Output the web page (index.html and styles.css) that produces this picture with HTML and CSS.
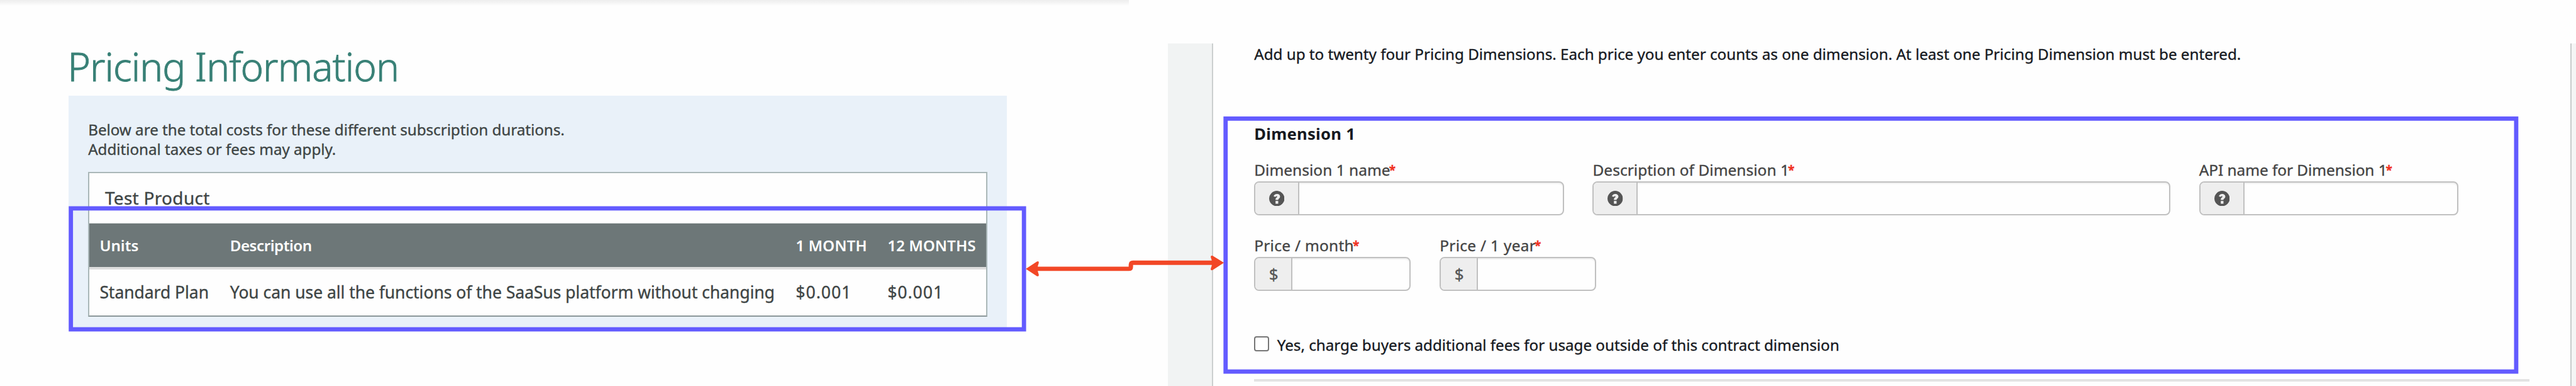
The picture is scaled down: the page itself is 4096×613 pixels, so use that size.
FILE: index.html
```
<!DOCTYPE html>
<html lang="en">
<head>
<meta charset="utf-8">
<title>Pricing Information</title>
<link rel="stylesheet" href="styles.css">
</head>
<body>
<svg class="defs" width="0" height="0" aria-hidden="true">
  <symbol id="help" viewBox="0 0 31 31">
    <circle cx="15.5" cy="15.5" r="15.4" fill="#555"/>
    <path d="M8.9 11.2C10 8.1 12.4 6.2 15.7 6.2c3.500 0 6.300 2.300 6.300 5.300 0 3.600-3.200 4.300-3.700 6.200v.8h-5.400v-1.600c0-3.100 3.300-3.600 3.300-5 0-.7-.5-1-1.200-1-1 0-1.500.6-2.100 1.500z" fill="#eee"/>
    <rect x="12.900" y="20.400" width="5.400" height="5.600" fill="#eee"/>
  </symbol>
</svg>
<main class="board">
  <section class="listing">
    <div class="top-shadow"></div>
    <h1 class="title">Pricing Information</h1>
    <div class="costs">
      <p class="intro">Below are the total costs for these different subscription durations.<br>Additional taxes or fees may apply.</p>
      <div class="plan-table">
        <div class="product">Test Product</div>
        <div class="row head"><span>Units</span><span class="tight">Description</span><span class="caps">1 MONTH</span><span class="caps">12 MONTHS</span></div>
        <div class="row plan"><span>Standard Plan</span><span>You can use all the functions of the SaaSus platform without changing</span><span class="price">$0.001</span><span class="price">$0.001</span></div>
      </div>
    </div>
  </section>
  <section class="editor">
    <div class="gutter"></div>
    <div class="form">
      <p class="hint">Add up to twenty four Pricing Dimensions. Each price you enter counts as one dimension. At least one Pricing Dimension must be entered.</p>
      <h2 class="dimension">Dimension 1</h2>
      <div class="fields">
        <div class="field name"><label>Dimension 1 name<b>*</b></label><div class="input"><span class="addon"><svg class="icon"><use href="#help"/></svg></span></div></div>
        <div class="field description"><label>Description of Dimension 1<b>*</b></label><div class="input"><span class="addon"><svg class="icon"><use href="#help"/></svg></span></div></div>
        <div class="field api"><label>API name for Dimension 1<b>*</b></label><div class="input"><span class="addon"><svg class="icon"><use href="#help"/></svg></span></div></div>
      </div>
      <div class="fields prices">
        <div class="field amount"><label>Price / month<b>*</b></label><div class="input"><span class="addon">$</span></div></div>
        <div class="field amount"><label>Price / 1 year<b>*</b></label><div class="input"><span class="addon">$</span></div></div>
      </div>
      <div class="extra"><span class="checkbox"></span><span>Yes, charge buyers additional fees for usage outside of this contract dimension</span></div>
      <div class="rule"></div>
    </div>
    <div class="edge"></div>
  </section>
  <svg class="annotations" viewBox="0 0 5169 773" preserveAspectRatio="none">
    <g fill="none" stroke="#635bff" stroke-width="8.600">
      <rect x="142.200" y="417.300" width="1912.500" height="242.200"/>
      <rect x="2459.300" y="237.500" width="2589.700" height="506.600"/>
    </g>
    <path d="M2078 538.300H2265q4.200 0 4.200-4V530.300q0-4 4.200-4H2436" fill="none" stroke="#f24726" stroke-width="8.800"/>
    <path d="M2058.300 538.300L2080.500 523.800Q2085 522.300 2084.500 526.500Q2079.500 538.300 2084.500 550Q2085 554.300 2080.500 552.800Z" fill="#f24726"/>
    <path d="M2456 526.300L2433.500 512.300Q2429 510.800 2429.500 515Q2434.500 526.800 2429.500 538Q2429 542.300 2433.500 540.800Z" fill="#f24726"/>
  </svg>
</main>
</body>
</html>
```
FILE: styles.css
```
* { box-sizing: border-box; }
body { margin: 0; background: #fefefe; font-family: "Noto Sans", sans-serif; font-size: 24.2px; -webkit-text-stroke: .35px; }
h1, h2, p { margin: 0; }
.defs { position: absolute; }
.board { position: relative; display: flex; width: 4096px; height: 613px; overflow: hidden; white-space: nowrap; }

.listing { width: 1857.4px; flex: none; }
.top-shadow { width: 1794.8px; height: 9px; background: linear-gradient(#eee, #f3f3f3 40%, #fefefe); }
.title { margin: 59.500px 0 0 107.400px; font-size: 62px; font-weight: 300; line-height: 72px; letter-spacing: -.9px; color: #388076; -webkit-text-stroke: .8px; }
.costs { width: 1492.400px; height: 370.600px; margin: 11.900px 0 0 108.700px; padding: 37.500px 31.500px 0; background: #e9f1f9; }
.intro { line-height: 31.400px; letter-spacing: -.02px; color: #3e4545; }
.plan-table { height: 230px; margin-top: 20.700px; border: 2px solid #aab7b8; border-bottom-color: #8b9799; background: #fefefe; color: #3e4545; }
.product { height: 79px; padding-left: 24.700px; font-size: 28px; line-height: 79.500px; letter-spacing: .3px; }
.row { display: grid; grid-template-columns: 207.400px 899.600px 145.800px 1fr; padding-left: 16.200px; }
.head { height: 73.200px; border-top: 1px solid #d9dcdc; border-bottom: 4px solid #ddd; background: #6d7778; color: #fff; font-weight: 600; line-height: 69.500px; -webkit-text-stroke: 0; }
.plan { font-size: 26.500px; line-height: 73px; letter-spacing: -.05px; }
.tight { letter-spacing: -.5px; }
.caps { letter-spacing: .05px; }
.price { letter-spacing: 1px; }

.editor { display: flex; width: 2238.600px; height: 544.100px; margin-top: 68.900px; }
.gutter { width: 72px; flex: none; border-right: 2px solid #cbcfcf; background: #f1f3f3; }
.form { width: 2157.300px; flex: none; padding-left: 64.800px; color: #16191f; }
.edge { width: 9.300px; flex: none; border-left: 2px solid #c8cccc; background: #f4f5f5; }
.hint { padding-top: 1.600px; line-height: 32px; }
.dimension { margin-top: 94.300px; font-size: 25.600px; font-weight: 700; line-height: 32px; letter-spacing: .3px; -webkit-text-stroke: 0; }
.fields { display: flex; gap: 45.900px; margin-top: 25.900px; }
.prices { margin-top: 33.100px; }
.field label { display: block; height: 33.500px; font-size: 24.400px; line-height: 30.500px; letter-spacing: .06px; color: #444; }
.field b { margin-left: -2px; font-size: 19px; line-height: 1; vertical-align: 2px; color: #f0301f; }
.name { width: 492.400px; }
.description { width: 918.400px; }
.api { width: 412px; }
.api label { letter-spacing: -.05px; }
.amount { width: 249.200px; }
.amount label { letter-spacing: .3px; }
.input { height: 53.600px; overflow: hidden; border: 2px solid #c0c0c0; border-radius: 8px; background: #fefefe; box-shadow: inset 0 2px 2px #eee; }
.addon { display: flex; align-items: center; justify-content: center; width: 70px; height: 100%; border-right: 2px solid #c0c0c0; background: #eee; color: #555; }
.amount .addon { width: 59px; padding-left: 1px; font-size: 26px; }
.icon { width: 24.500px; height: 24.500px; }
.extra { display: flex; gap: 13px; margin-top: 69.900px; line-height: 32px; }
.checkbox { width: 23.500px; height: 23.800px; margin-top: 1.900px; border: 2px solid #767676; border-radius: 4px; background: #fff; }
.rule { width: 2027.500px; height: 4px; margin-top: 38.200px; background: #e3e3e3; }
.annotations { position: absolute; inset: 0; width: 100%; height: 100%; }
```
